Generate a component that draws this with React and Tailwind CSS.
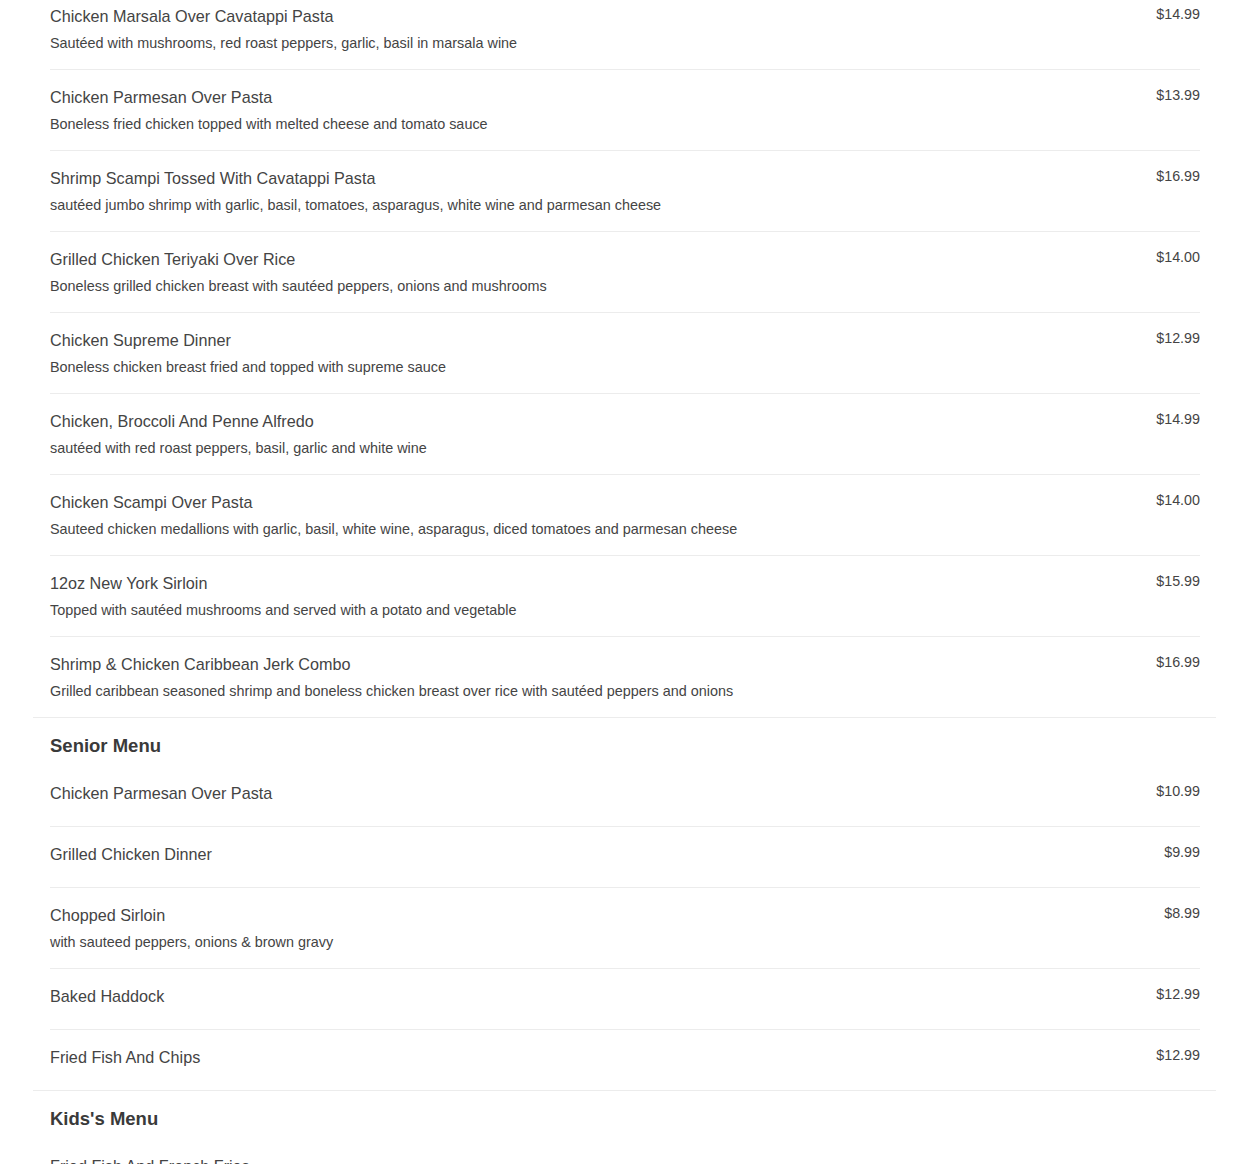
const sections = [
  {
    title: null,
    items: [
      ["Chicken Marsala Over Cavatappi Pasta", "Sautéed with mushrooms, red roast peppers, garlic, basil in marsala wine", "$14.99"],
      ["Chicken Parmesan Over Pasta", "Boneless fried chicken topped with melted cheese and tomato sauce", "$13.99"],
      ["Shrimp Scampi Tossed With Cavatappi Pasta", "sautéed jumbo shrimp with garlic, basil, tomatoes, asparagus, white wine and parmesan cheese", "$16.99"],
      ["Grilled Chicken Teriyaki Over Rice", "Boneless grilled chicken breast with sautéed peppers, onions and mushrooms", "$14.00"],
      ["Chicken Supreme Dinner", "Boneless chicken breast fried and topped with supreme sauce", "$12.99"],
      ["Chicken, Broccoli And Penne Alfredo", "sautéed with red roast peppers, basil, garlic and white wine", "$14.99"],
      ["Chicken Scampi Over Pasta", "Sauteed chicken medallions with garlic, basil, white wine, asparagus, diced tomatoes and parmesan cheese", "$14.00"],
      ["12oz New York Sirloin", "Topped with sautéed mushrooms and served with a potato and vegetable", "$15.99"],
      ["Shrimp & Chicken Caribbean Jerk Combo", "Grilled caribbean seasoned shrimp and boneless chicken breast over rice with sautéed peppers and onions", "$16.99"],
    ],
  },
  {
    title: "Senior Menu",
    items: [
      ["Chicken Parmesan Over Pasta", null, "$10.99"],
      ["Grilled Chicken Dinner", null, "$9.99"],
      ["Chopped Sirloin", "with sauteed peppers, onions & brown gravy", "$8.99"],
      ["Baked Haddock", null, "$12.99"],
      ["Fried Fish And Chips", null, "$12.99"],
    ],
  },
  {
    title: "Kids's Menu",
    items: [
      ["Fried Fish And French Fries", null, null],
    ],
  },
];

function Item({ name, desc, price, last }) {
  return (
    <div className={"flex justify-between pt-4 pb-4 " + (last ? "" : "border-b border-[#ececec]")}>
      <div className="flex flex-col">
        <div className="text-[16.2px] leading-[22px] text-[#444] mb-[6px]">{name}</div>
        {desc && <div className="text-[14.4px] leading-[20px] text-[#444]">{desc}</div>}
      </div>
      {price && <div className="text-[14.3px] leading-[20px] text-[#444] -mt-[1px]">{price}</div>}
    </div>
  );
}

export default function App() {
  return (
    <div className="bg-white w-[1250px] h-[1164px] overflow-hidden" style={{ fontFamily: '"Liberation Sans", Arial, sans-serif' }}>
      <div className="-mt-[11px]">
        {sections.map((s, si) => (
          <div
            key={si}
            className={"ml-[33px] w-[1183px] pl-[17px] pr-4 " + (si < sections.length - 1 ? "border-b border-[#ececec]" : "")}
          >
            {s.title && (
              <div className="pt-[14px] pb-[6px] text-[18.5px] leading-[28px] font-bold text-[#3a3a3a]">{s.title}</div>
            )}
            {s.items.map((it, ii) => (
              <Item key={ii} name={it[0]} desc={it[1]} price={it[2]} last={ii === s.items.length - 1} />
            ))}
          </div>
        ))}
      </div>
    </div>
  );
}
